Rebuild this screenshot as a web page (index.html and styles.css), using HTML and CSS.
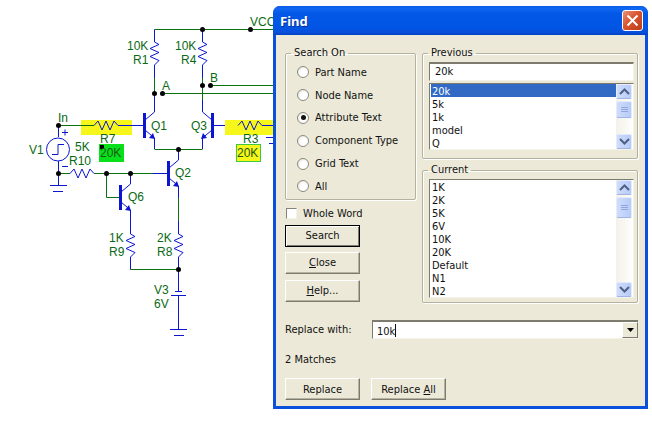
FILE: index.html
```html
<!DOCTYPE html>
<html lang="en">
<head>
<meta charset="utf-8">
<title>Find</title>
<link rel="stylesheet" href="styles.css">
</head>
<body>
<main class="desktop">
<svg class="schematic" width="273" height="345" viewBox="0 0 273 345">
  <rect class="hl-yellow" x="81" y="120" width="51" height="15"/>
  <rect class="hl-yellow" x="225" y="120" width="48" height="15"/>
  <rect class="hl-green" x="99" y="144" width="25" height="18"/>
  <rect class="hl-yellow box" x="236.500" y="144.500" width="24" height="17"/>
  <rect class="handle" x="100" y="145" width="4" height="4"/>

  <g class="wire-g">
    <path d="M154.500 29.500H273M162 93.500H273M210 85.500H273"/>
    <path d="M154.500 78V93M202.500 78V100"/>
    <path d="M58.500 125.500H94M154.500 149.500H202.500M58.500 173.500H70M94 173.500H153"/>
    <path d="M106.500 173.500V197.500H120M178.500 198V221M130.500 269.500H178.500"/>
  </g>

  <g class="wire-b">
    <path d="M154.500 29.500V42M154.500 65V78M202.500 29.500V42M202.500 65V78"/>
    <path d="M154.500 42l4.500 2.500-9 4 9 4-9 4 9 4-4.500 4.500M202.500 42l4.500 2.500-9 4 9 4-9 4 9 4-4.500 4.500"/>
    <path d="M94 125.500l4-4.500 4 9 4-9 4 9 4-9 4 4.500H144M238 125.500l4-4.500 4 9 4-9 4 9 4-9 4 4.500H273M212 125.500H225"/>
    <path d="M70 173.500l4-4.500 4 9 4-9 4 9 4-9 4 4.500"/>
    <path d="M154.500 93V112L145 120M145 130L154.500 138V149M202.500 100V112L212 120M212 130L202.500 138V149"/>
    <path d="M178.500 149V160L169 168M169 178L178.500 186V198M178.500 221V234M130.500 173V184L121 192M121 202L130.500 210V234"/>
    <path d="M130.500 234l4.500 2.500-9 4 9 4-9 4 9 4-4.500 4.500V269.500M178.500 234l4.500 2.500-9 4 9 4-9 4 9 4-4.500 4.500V269.500"/>
    <path d="M153 173.500H168M178.500 269.500V291M178.500 295V329M58.500 125.500V137M58.500 161V185"/>
    <path d="M50 185.500H67M53 191.500H63M175 291.500H182M171 295.500H186M170 329.500H187M174 335.500H184"/>
    <circle cx="58" cy="149.500" r="11.500"/>
    <path d="M52 154.500H58V144.500H64"/>
    <path d="M62 132.500H68M65 129.500V135.500M62 166.500H68"/>
    <path d="M266 137.500H273M269 143.500H273"/>
  </g>

  <g class="bars">
    <rect x="143" y="113" width="3" height="25"/>
    <rect x="211" y="113" width="3" height="25"/>
    <rect x="167" y="161" width="3" height="25"/>
    <rect x="119" y="185" width="3" height="25"/>
    <path d="M155 139l-6-1 4-5zM201 139l6-1-4-5zM179 187l-6-1 4-5zM131 211l-6-1 4-5z"/>
  </g>

  <g class="dots">
    <circle cx="202.500" cy="29.500" r="2.500"/><circle cx="250.500" cy="29.500" r="2.500"/>
    <circle cx="154.500" cy="93.500" r="2.500"/><circle cx="162.500" cy="93.500" r="2.500"/>
    <circle cx="202.500" cy="85.500" r="2.500"/><circle cx="210.500" cy="85.500" r="2.500"/>
    <circle cx="58.500" cy="125.500" r="2.500"/><circle cx="178.500" cy="149.500" r="2.500"/>
    <circle cx="58.500" cy="173.500" r="2.500"/><circle cx="106.500" cy="173.500" r="2.500"/>
    <circle cx="130.500" cy="173.500" r="2.500"/><circle cx="178.500" cy="269.500" r="2.500"/>
  </g>

  <g class="labels">
    <text x="250" y="26">VCC</text>
    <text x="127" y="50">10K</text><text x="133" y="64">R1</text>
    <text x="175" y="50">10K</text><text x="181" y="64">R4</text>
    <text x="162" y="90">A</text><text x="210" y="82">B</text>
    <text x="58" y="122">In</text>
    <text x="151" y="130">Q1</text><text x="191" y="130">Q3</text>
    <text x="100" y="143">R7</text><text x="243" y="143">R3</text>
    <text class="dark" x="100" y="157">20K</text><text class="dark" x="237" y="157">20K</text>
    <text x="29" y="154">V1</text><text x="75" y="151">5K</text>
    <text x="69" y="165">R10</text>
    <text x="175" y="177">Q2</text><text x="128" y="201">Q6</text>
    <text x="109" y="242">1K</text><text x="109" y="256">R9</text>
    <text x="157" y="242">2K</text><text x="157" y="256">R8</text>
    <text x="154" y="294">V3</text><text x="154" y="308">6V</text>
  </g>
</svg>

<section class="window">
  <header class="titlebar">
    <h1 class="title">Find</h1>
    <div class="close">
      <svg width="13" height="13" viewBox="0 0 13 13"><path class="close-x" d="M1.500 1.500L11.500 11.500M11.500 1.500L1.500 11.500"/></svg>
    </div>
  </header>
  <div class="client">
    <div class="columns">
      <div class="col-left">
        <fieldset class="group">
          <legend class="legend">Search On</legend>
          <div class="radios">
            <label class="radio-row"><span class="radio"></span>Part Name</label>
            <label class="radio-row"><span class="radio"></span>Node Name</label>
            <label class="radio-row"><span class="radio checked"></span>Attribute Text</label>
            <label class="radio-row"><span class="radio"></span>Component Type</label>
            <label class="radio-row"><span class="radio"></span>Grid Text</label>
            <label class="radio-row"><span class="radio"></span>All</label>
          </div>
        </fieldset>
        <label class="check-row"><span class="check"></span>Whole Word</label>
        <button class="btn default">Search</button>
        <button class="btn gap5"><u>C</u>lose</button>
        <button class="btn gap6"><u>H</u>elp...</button>
      </div>
      <div class="col-right">
        <fieldset class="group previous">
          <legend class="legend inset">Previous</legend>
          <div class="field prev-field">20k</div>
          <div class="list short">
            <ul class="items">
              <li class="item selected">20k</li><li class="item">5k</li><li class="item">1k</li><li class="item">model</li><li class="item">Q</li>
            </ul>
            <div class="scroll">
              <span class="sb-btn"><svg width="11" height="7" viewBox="0 0 11 7"><path class="chev" d="M1 6L5.500 1.500L10 6"/></svg></span>
              <span class="sb-thumb thumb-a"><i></i><i></i><i></i></span>
              <span class="sb-track"></span>
              <span class="sb-btn"><svg width="11" height="7" viewBox="0 0 11 7"><path class="chev" d="M1 1L5.500 5.500L10 1"/></svg></span>
            </div>
          </div>
        </fieldset>
        <fieldset class="group current">
          <legend class="legend inset">Current</legend>
          <div class="list tall">
            <ul class="items">
              <li class="item">1K</li><li class="item">2K</li><li class="item">5K</li><li class="item">6V</li><li class="item">10K</li><li class="item">20K</li><li class="item">Default</li><li class="item">N1</li><li class="item">N2</li>
            </ul>
            <div class="scroll">
              <span class="sb-btn"><svg width="11" height="7" viewBox="0 0 11 7"><path class="chev" d="M1 6L5.500 1.500L10 6"/></svg></span>
              <span class="sb-thumb thumb-b"><i></i><i></i><i></i></span>
              <span class="sb-track"></span>
              <span class="sb-btn"><svg width="11" height="7" viewBox="0 0 11 7"><path class="chev" d="M1 1L5.500 5.500L10 1"/></svg></span>
            </div>
          </div>
        </fieldset>
      </div>
    </div>
    <div class="replace-row">
      <span class="replace-label">Replace with:</span>
      <div class="combo">
        <span class="combo-text">10k<span class="caret"></span></span>
        <span class="combo-btn"><svg width="7" height="4" viewBox="0 0 7 4"><path d="M0 0H7L3.500 4z"/></svg></span>
      </div>
    </div>
    <p class="matches">2 Matches</p>
    <div class="actions">
      <button class="btn">Replace</button>
      <button class="btn">Replace <u>A</u>ll</button>
    </div>
  </div>
</section>
</main>
</body>
</html>
```

FILE: styles.css
```css
* { box-sizing: border-box; }
html, body { margin: 0; padding: 0; background: #fff; }
.desktop { position: relative; width: 652px; height: 425px; overflow: hidden; }

.schematic { position: absolute; left: 0; top: 0; }
.wire-g path { fill: none; stroke: #0a7010; stroke-width: 1; }
.wire-b path, .wire-b circle { fill: none; stroke: #0c16d0; stroke-width: 1; }
.bars rect, .bars path { fill: #0c16d0; }
.dots circle { fill: #000; }
.hl-yellow { fill: #f6f61a; }
.hl-yellow.box { stroke: #3fc83f; stroke-width: 1; }
.hl-green { fill: #08e01c; }
.handle { fill: #000; }
.labels text { font: 12px "Liberation Sans", Arial, sans-serif; fill: #0a6a14; }
.labels text.dark { fill: #1a5a14; }

.window {
  position: absolute; left: 273px; top: 6px; width: 375px; height: 403px;
  background: #0a50dc; border-radius: 7px 7px 0 0; padding: 0 3px 3px;
  display: flex; flex-direction: column;
  font-family: "DejaVu Sans Condensed", "DejaVu Sans", sans-serif;
  font-stretch: condensed; font-size: 11px; line-height: 13px; color: #111;
}
.titlebar {
  margin: 0 -3px; height: 29px; flex: none; border-radius: 7px 7px 0 0;
  background: linear-gradient(#0a5ae6 0, #1168f0 8%, #0458e8 25%, #0055e5 75%, #0a4fd8 92%, #0040c0 100%);
  display: flex; align-items: center; justify-content: space-between; padding: 0 5px 0 7px;
}
.title { margin: 0; font: bold 13px "Noto Sans", Tahoma, sans-serif; color: #fff; text-shadow: 1px 1px #0a2f90; }
.close {
  width: 21px; height: 21px; border: 1px solid #fff; border-radius: 3px;
  background: linear-gradient(135deg, #e89078, #d8552e 45%, #bf3c1a);
  display: flex; align-items: center; justify-content: center;
}
.close-x { stroke: #fff; stroke-width: 2; fill: none; }

.client { flex: 1; background: #ece9d8; padding: 11px 7px 0 9px; display: flex; flex-direction: column; }
.columns { display: flex; gap: 6px; }
.col-left { width: 131px; display: flex; flex-direction: column; }
.col-right { width: 216px; display: flex; flex-direction: column; }

.group {
  margin: 0; padding: 0; border: 1px solid #b4b19f; border-radius: 2px;
  box-shadow: inset 1px 1px #fff, 1px 1px #fff;
  min-width: 0;
}
.legend { padding: 0 3px; margin-left: 5px; line-height: 14px; }
.legend.inset { margin-left: -1px; }

.radios { padding: 1px 0 1px 11px; }
.radio-row { display: flex; align-items: center; height: 22.800px; gap: 6px; }
.radio {
  flex: none; width: 12px; height: 12px; border-radius: 50%; border: 1px solid #8c8a7e;
  background: radial-gradient(circle at 65% 65%, #fff 45%, #dcdad0);
  display: flex; align-items: center; justify-content: center;
}
.radio.checked::after { content: ""; width: 5px; height: 5px; border-radius: 50%; background: #111; }

.check-row { display: flex; align-items: center; gap: 6px; height: 13px; margin: 7px 0 5px 1px; }
.check { width: 11px; height: 11px; background: #fff; border: 1px solid #85847a; border-color: #85847a #f4f3ea #f4f3ea #85847a; }

.btn {
  width: 75px; height: 22px; flex: none; padding: 0;
  font-family: inherit; font-stretch: condensed; font-size: 11px; color: #111; background: #ece9d8;
  border: 1px solid; border-color: #fff #7d7b6e #7d7b6e #fff;
  box-shadow: inset -1px -1px #b5b2a2;
}
.btn.default { border: 1px solid #000; box-shadow: inset 1px 1px #fff, inset -1px -1px #7d7b6e; }
.gap5 { margin-top: 5px; }
.gap6 { margin-top: 6px; }

.previous { height: 113px; padding: 0 3px 0 6px; }
.current { height: 140px; margin-top: 4px; padding: 2px 3px 0 6px; }
.field {
  height: 19px; padding: 1px 5px 0; background: #fff; margin-top: 2px;
  border: 1px solid; border-color: #7d7b6e #f4f3ea #f4f3ea #7d7b6e; border-top-width: 2px;
  line-height: 14px;
}
.list {
  margin-top: 2px; display: flex; background: #fff; padding: 0 1px;
  border: 1px solid; border-color: #7d7b6e #f4f3ea #f4f3ea #7d7b6e;
}
.list.short { height: 67px; }
.list.tall { height: 119px; margin-top: 0; }
.items { flex: 1; margin: 0; padding: 0; list-style: none; }
.item { height: 13px; line-height: 15px; padding-left: 1px; }
.item.selected { background: #316ac5; color: #fff; }

.scroll { width: 16px; display: flex; flex-direction: column; background: linear-gradient(90deg, #f3f2ea, #fdfdfb); }
.sb-btn, .sb-thumb {
  display: flex; flex: none; align-items: center; justify-content: center;
  border: 1px solid #e4ecfc; border-bottom-color: #9db4e4; border-radius: 2px;
  background: linear-gradient(90deg, #cfdcfb, #b7cbf8);
}
.sb-btn { height: 15px; }
.sb-thumb { flex-direction: column; gap: 1px; margin-top: 2px; }
.sb-thumb i { display: block; width: 7px; height: 1px; background: #8ea7dc; }
.thumb-a { height: 17px; }
.thumb-b { height: 21px; }
.sb-track { flex: 1; }
.chev { fill: none; stroke: #4d6185; stroke-width: 2; }

.replace-row { display: flex; align-items: center; margin-top: 17px; height: 19px; }
.replace-label { width: 87px; }
.combo {
  width: 266px; height: 19px; display: flex; justify-content: space-between; background: #fff;
  border-top: 2px solid #7d7b6e; border-left: 1px solid #7d7b6e; border-bottom: 1px solid #f4f3ea;
}
.combo-text { padding: 2px 0 0 4px; line-height: 14px; }
.caret { display: inline-block; width: 1px; height: 13px; background: #111; vertical-align: -2px; }
.combo-btn {
  width: 16px; display: flex; align-items: center; justify-content: center; background: #ece9d8;
  border: 1px solid; border-color: #fff #7d7b6e #7d7b6e #fff;
}

.matches { margin: 14px 0 0; height: 13px; }
.actions { display: flex; gap: 11px; margin-top: 12px; }
```
